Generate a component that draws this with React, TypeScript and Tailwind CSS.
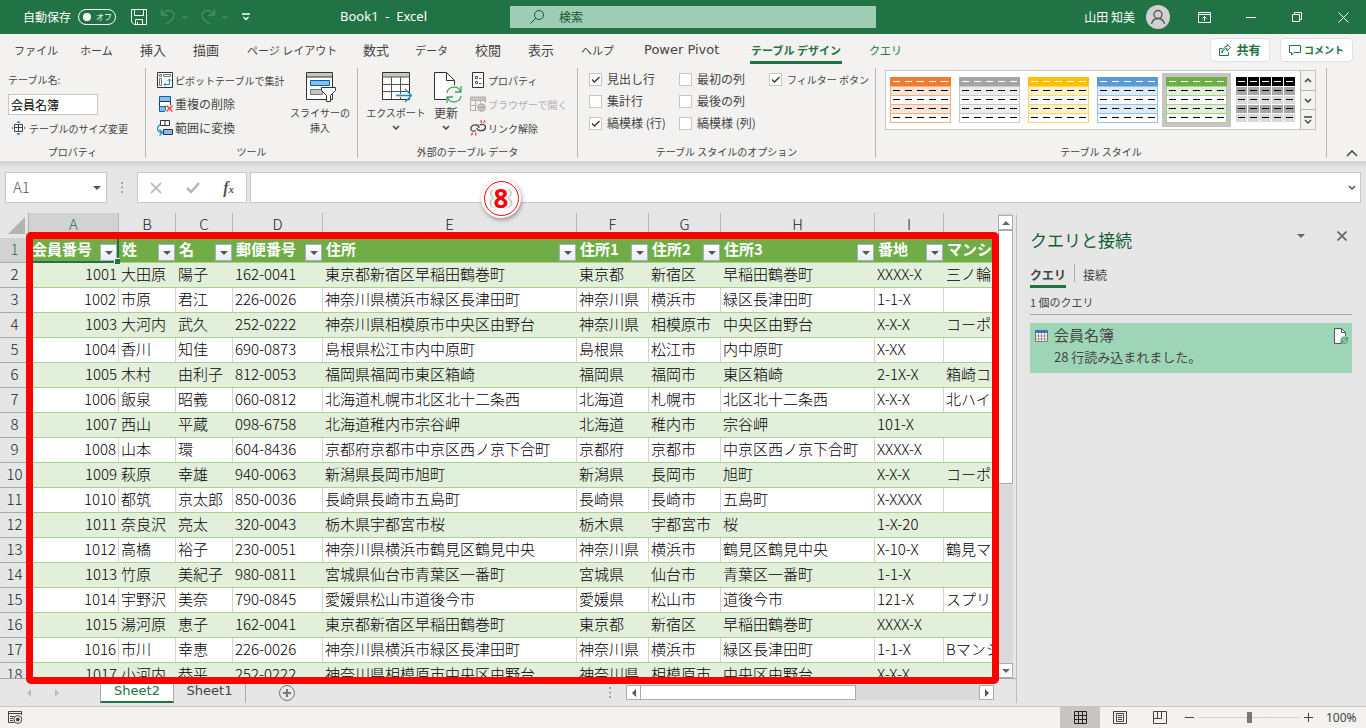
import type { ReactNode } from "react";

type Row = [number, string, string, string, string, string, string, string, string, string];

const rows: Row[] = [
  [1001, "大田原", "陽子", "162-0041", "東京都新宿区早稲田鶴巻町", "東京都", "新宿区", "早稲田鶴巻町", "XXXX-X", "三ノ輪"],
  [1002, "市原", "君江", "226-0026", "神奈川県横浜市緑区長津田町", "神奈川県", "横浜市", "緑区長津田町", "1-1-X", ""],
  [1003, "大河内", "武久", "252-0222", "神奈川県相模原市中央区由野台", "神奈川県", "相模原市", "中央区由野台", "X-X-X", "コーポ"],
  [1004, "香川", "知佳", "690-0873", "島根県松江市内中原町", "島根県", "松江市", "内中原町", "X-XX", ""],
  [1005, "木村", "由利子", "812-0053", "福岡県福岡市東区箱崎", "福岡県", "福岡市", "東区箱崎", "2-1X-X", "箱崎コ"],
  [1006, "飯泉", "昭義", "060-0812", "北海道札幌市北区北十二条西", "北海道", "札幌市", "北区北十二条西", "X-X-X", "北ハイ"],
  [1007, "西山", "平蔵", "098-6758", "北海道稚内市宗谷岬", "北海道", "稚内市", "宗谷岬", "101-X", ""],
  [1008, "山本", "環", "604-8436", "京都府京都市中京区西ノ京下合町", "京都府", "京都市", "中京区西ノ京下合町", "XXXX-X", ""],
  [1009, "萩原", "幸雄", "940-0063", "新潟県長岡市旭町", "新潟県", "長岡市", "旭町", "X-X-X", "コーポ"],
  [1010, "都筑", "京太郎", "850-0036", "長崎県長崎市五島町", "長崎県", "長崎市", "五島町", "X-XXXX", ""],
  [1011, "奈良沢", "亮太", "320-0043", "栃木県宇都宮市桜", "栃木県", "宇都宮市", "桜", "1-X-20", ""],
  [1012, "高橋", "裕子", "230-0051", "神奈川県横浜市鶴見区鶴見中央", "神奈川県", "横浜市", "鶴見区鶴見中央", "X-10-X", "鶴見マ"],
  [1013, "竹原", "美紀子", "980-0811", "宮城県仙台市青葉区一番町", "宮城県", "仙台市", "青葉区一番町", "1-1-X", ""],
  [1014, "宇野沢", "美奈", "790-0845", "愛媛県松山市道後今市", "愛媛県", "松山市", "道後今市", "121-X", "スプリ"],
  [1015, "湯河原", "恵子", "162-0041", "東京都新宿区早稲田鶴巻町", "東京都", "新宿区", "早稲田鶴巻町", "XXXX-X", ""],
  [1016, "市川", "幸恵", "226-0026", "神奈川県横浜市緑区長津田町", "神奈川県", "横浜市", "緑区長津田町", "1-1-X", "Bマンシ"],
  [1017, "小河内", "恭平", "252-0222", "神奈川県相模原市中央区由野台", "神奈川県", "相模原市", "中央区由野台", "X-X-X", ""],
];

const columns = [
  { letter: "A", title: "会員番号", width: "w-[90px]" },
  { letter: "B", title: "姓", width: "w-[57px]" },
  { letter: "C", title: "名", width: "w-[57px]" },
  { letter: "D", title: "郵便番号", width: "w-[90px]" },
  { letter: "E", title: "住所", width: "w-[254px]" },
  { letter: "F", title: "住所1", width: "w-[72px]" },
  { letter: "G", title: "住所2", width: "w-[72px]" },
  { letter: "H", title: "住所3", width: "w-[154px]" },
  { letter: "I", title: "番地", width: "w-[69px]" },
  { letter: "", title: "マンション", width: "w-[120px]" },
];

const tabs = [
  { name: "ファイル", cls: "w-[66px] text-[11px]" },
  { name: "ホーム", cls: "w-[60px] text-[11px]" },
  { name: "挿入", cls: "w-[53px] text-[13px]" },
  { name: "描画", cls: "w-[54px] text-[13px]" },
  { name: "ページ レイアウト", cls: "w-[116px] text-[11px]" },
  { name: "数式", cls: "w-[52px] text-[13px]" },
  { name: "データ", cls: "w-[60px] text-[11px]" },
  { name: "校閲", cls: "w-[53px] text-[13px]" },
  { name: "表示", cls: "w-[53px] text-[13px]" },
  { name: "ヘルプ", cls: "w-[63px] text-[11px]" },
  { name: "Power Pivot", cls: "w-[106px] font-['DejaVu_Sans','Noto_Sans_CJK_JP',sans-serif] text-[13px]" },
];

const styles = [
  { name: "オレンジ", head: "#ed7d31", band: "#fce4d6", line: "#f4b084" },
  { name: "灰色", head: "#a5a5a5", band: "#ededed", line: "#c9c9c9" },
  { name: "ゴールド", head: "#ffc000", band: "#fff2cc", line: "#ffd966" },
  { name: "青", head: "#5b9bd5", band: "#ddebf7", line: "#9bc2e6" },
  { name: "緑", head: "#70ad47", band: "#e2efda", line: "#a9d08e", selected: true },
];

function Chevron({ up, className = "" }: { up?: boolean; className?: string }) {
  return (
    <svg width="8" height="5" viewBox="0 0 8 5" fill="none" stroke="currentColor" strokeWidth="1.5" className={className}>
      <path d={up ? "M1 4 4 1l3 3" : "M1 1l3 3 3-3"} />
    </svg>
  );
}

function Triangle({ dir, className = "" }: { dir: "up" | "down" | "left" | "right"; className?: string }) {
  const d = { up: "M0 6h8L4 2z", down: "M0 2h8L4 6z", left: "M6 0v8L2 4z", right: "M2 0v8l4-4z" }[dir];
  return (
    <svg width="8" height="8" viewBox="0 0 8 8" fill="currentColor" className={className}>
      <path d={d} />
    </svg>
  );
}

function TitleBar() {
  return (
    <header className="flex h-[34px] shrink-0 items-center bg-[#217346] text-xs text-white">
      <div className="flex flex-1 items-center pl-[23px]">
        <span>自動保存</span>
        <button aria-label="自動保存 オフ" className="ml-[7px] flex h-4 w-[38px] items-center gap-[5px] rounded-full border border-white pl-1 text-[8px]">
          <span className="size-2 rounded-full bg-white" />
          <span className="leading-none">オフ</span>
        </button>
        <button aria-label="上書き保存" className="ml-[15px]">
          <svg width="16" height="16" viewBox="0 0 16 16" fill="none" stroke="currentColor">
            <path d="M.5.5h15v15H3L.5 13zM3.5.5v6h9v-6M4.500 15.500v-5h7v5M6.500 13v2.500" />
          </svg>
        </button>
        <button aria-label="元に戻す" className="ml-[13px] flex items-center gap-[6px] text-[#4d9069]">
          <svg width="16" height="17" viewBox="0 0 16 17" fill="none" stroke="currentColor" strokeWidth="1.3">
            <path d="M1.500 1v6h6M2 6.500C5 3 9 1.500 12 3.500c3 2 2.500 5.500.5 7.500L7 16" />
          </svg>
          <svg width="6" height="4" viewBox="0 0 8 5" fill="none" stroke="currentColor" strokeWidth="1.500"><path d="M1 1l3 3 3-3" /></svg>
        </button>
        <button aria-label="やり直し" className="ml-[12px] flex items-center gap-[6px] text-[#4d9069]">
          <svg width="16" height="17" viewBox="0 0 16 17" fill="none" stroke="currentColor" strokeWidth="1.3">
            <path d="M14.500 1v6h-6M14 6.500C11 3 7 1.500 4 3.500 1 5.500 1.500 9 3.500 11L9 16" />
          </svg>
          <svg width="6" height="4" viewBox="0 0 8 5" fill="none" stroke="currentColor" strokeWidth="1.500"><path d="M1 1l3 3 3-3" /></svg>
        </button>
        <button aria-label="クイック アクセス ツール バーのカスタマイズ" className="ml-[14px]">
          <svg width="8" height="8" viewBox="0 0 8 8" fill="none" stroke="currentColor" strokeWidth="1.3">
            <path d="M0 1h8M1.500 4 4 6.500 6.500 4" />
          </svg>
        </button>
        <h1 className="ml-[90px] whitespace-pre font-['Noto_Sans',sans-serif] text-[13px]">Book1  -  Excel</h1>
      </div>
      <label className="flex h-[22px] w-[366px] items-center gap-[15px] bg-[#9fcdb3] pl-5 text-[#0f5a30]">
        <svg width="14" height="14" viewBox="0 0 14 14" fill="none" stroke="currentColor">
          <circle cx="9" cy="5" r="4.500" />
          <path d="M5.800 8.200.5 13.500" />
        </svg>
        <input aria-label="検索" placeholder="検索" className="w-40 bg-transparent outline-none placeholder:text-[#0f5a30]" />
      </label>
      <div className="flex w-[490px] shrink-0 items-center justify-end pr-[17px]">
        <span>山田 知美</span>
        <svg width="24" height="24" viewBox="0 0 24 24" className="ml-[11px]">
          <circle cx="12" cy="12" r="12" fill="#d1d1d1" />
          <g fill="none" stroke="#555" strokeWidth="1.3">
            <circle cx="12" cy="9.500" r="4" />
            <path d="M5.500 19c1-4 3.500-5.500 6.500-5.500s5.500 1.500 6.500 5.500" />
          </g>
        </svg>
        <button aria-label="リボンの表示オプション" className="ml-7">
          <svg width="13" height="11" viewBox="0 0 13 11" fill="none" stroke="currentColor">
            <path d="M.5.5h12v10H.5zM.5 2.500h12M6.500 9V4.500M4.500 6.500l2-2 2 2" />
          </svg>
        </button>
        <button aria-label="最小化" className="ml-[35px]">
          <svg width="10" height="10" viewBox="0 0 10 10" stroke="currentColor"><path d="M0 5.500h10" /></svg>
        </button>
        <button aria-label="元に戻す (縮小)" className="ml-9">
          <svg width="10" height="10" viewBox="0 0 10 10" fill="none" stroke="currentColor">
            <path d="M.5 2.500h7v7h-7zM2.500 2.500v-2h7v7h-2" />
          </svg>
        </button>
        <button aria-label="閉じる" className="ml-9">
          <svg width="11" height="11" viewBox="0 0 11 11" stroke="currentColor"><path d="M.5.5l10 10M10.500.5l-10 10" /></svg>
        </button>
      </div>
    </header>
  );
}

function TabBar() {
  return (
    <nav className="flex h-8 items-center pl-[14px]">
      {tabs.map((t) => (
        <button key={t.name} className={`shrink-0 whitespace-nowrap text-left leading-5 ${t.cls}`}>{t.name}</button>
      ))}
      <button className="h-7 w-[92px] shrink-0 whitespace-nowrap border-b-[3px] border-[#217346] pt-[3px] text-[11px] leading-5 font-bold text-[#217346]">
        テーブル デザイン
      </button>
      <button className="ml-[27px] shrink-0 text-[11px] leading-5 text-[#217346]">クエリ</button>
      <div className="ml-auto flex gap-[10px] pr-[13px] text-xs font-bold text-[#217346]">
        <button className="flex h-6 w-[60px] items-center justify-center gap-[5px] rounded-sm border border-[#e1dfdd] bg-white">
          <svg width="12" height="12" viewBox="0 0 12 12" fill="none" stroke="currentColor">
            <path d="M3 4.500H.5v7h9v-3M3 9c.5-3 2.500-4.500 5-4.500V7l3.500-3.500L8 .5v2C5 2.500 3 5 3 9z" />
          </svg>
          共有
        </button>
        <button className="flex h-6 w-[73px] items-center justify-center gap-[3px] rounded-sm border border-[#e1dfdd] bg-white text-[10px]">
          <svg width="12" height="11" viewBox="0 0 12 11" fill="none" stroke="currentColor">
            <path d="M.5.5h11v7H5L2.500 10V7.500h-2z" />
          </svg>
          コメント
        </button>
      </div>
    </nav>
  );
}

function Group({ label, className, children }: { label: string; className: string; children: ReactNode }) {
  return (
    <section className={`flex h-[90px] shrink-0 flex-col justify-between border-r border-[#b8b6b4] ${className}`}>
      <div className="flex">{children}</div>
      <h2 className="text-center text-[10px] leading-3 whitespace-nowrap">{label}</h2>
    </section>
  );
}

function Command({ icon, label, small, disabled }: { icon: ReactNode; label: string; small?: boolean; disabled?: boolean }) {
  return (
    <button disabled={disabled} className={`flex h-6 items-center gap-[2px] whitespace-nowrap ${small ? "text-[10px]" : "text-xs"} ${disabled ? "text-[#b1afad]" : ""}`}>
      <svg width="16" height="16" viewBox="0 0 16 16" fill="none">{icon}</svg>
      {label}
    </button>
  );
}

function Check({ label, checked, small }: { label: string; checked?: boolean; small?: boolean }) {
  return (
    <label className={`flex h-[22px] items-center gap-[5px] whitespace-nowrap ${small ? "text-[10px]" : "text-xs"}`}>
      <span className="grid place-items-center">
        <input type="checkbox" defaultChecked={checked} className="peer col-start-1 row-start-1 size-[13px] appearance-none border border-[#c8c6c4] bg-white" />
        <svg width="9" height="7" viewBox="0 0 9 7" fill="none" stroke="#333" strokeWidth="1.300" className="pointer-events-none invisible col-start-1 row-start-1 peer-checked:visible">
          <path d="M1 3.500 3.500 6 8.500 1" />
        </svg>
      </span>
      {label}
    </label>
  );
}

function StyleThumb({ head, band, line }: { head: string; band: string; line: string }) {
  return (
    <svg width="61" height="46" viewBox="0 0 61 46">
      <rect width="61" height="46" fill={line} />
      <rect width="61" height="9" fill={head} />
      {[0, 1, 2, 3].map((i) => (
        <rect key={i} x="1" y={10 + i * 9} width="59" height="8" fill={i % 2 ? "#fff" : band} />
      ))}
      {[0, 1, 2, 3, 4].map((i) => (
        <path key={i} d={`M3 ${4.5 + i * 9}h55`} stroke={i ? "#000" : "#fff"} strokeDasharray="7 5" />
      ))}
    </svg>
  );
}

function DarkThumb() {
  const fills = ["#000", "#a6a6a6", "#d9d9d9", "#a6a6a6", "#d9d9d9"];
  return (
    <svg width="61" height="46" viewBox="0 0 61 46">
      <rect width="61" height="46" fill="#fff" />
      {fills.map((fill, r) =>
        [0, 1, 2, 3, 4].map((c) => <rect key={`${r}-${c}`} x={c * 12 + 1} y={r * 9 + (r ? 1 : 0)} width="11" height={r ? 8 : 9} fill={fill} />)
      )}
      {fills.map((_, r) => (
        <path key={r} d={`M3 ${4.5 + r * 9}h55`} stroke={r ? "#000" : "#fff"} strokeDasharray="7 5" />
      ))}
    </svg>
  );
}

function Ribbon() {
  return (
    <div className="shrink-0 bg-[#f3f2f1] text-[#444]">
      <TabBar />
      <div className="flex h-[95px] items-start pt-[2px]">
        <Group label="プロパティ" className="w-[146px]">
          <div className="flex flex-col pl-2">
            <label htmlFor="table-name" className="h-6 text-[10px] leading-6">テーブル名:</label>
            <div className="flex h-6 items-center">
              <input id="table-name" defaultValue="会員名簿" className="h-[21px] w-[90px] border border-[#c8c6c4] bg-white px-[2px] text-xs text-black" />
            </div>
            <div className="pl-[3px]">
              <Command
                small
                label="テーブルのサイズ変更"
                icon={
                  <>
                    <path d="M3.500 4.500h8v7h-8zM3.500 7.500h8M7.500 4.500v7" stroke="#444" />
                    <path d="M5.500 3 7.500.5l2 2.500zM5.500 13l2 2.500 2-2.500zM2 6.500.5 8 2 9.500zM13 6.500 14.500 8 13 9.500z" fill="#1e8bcd" />
                  </>
                }
              />
            </div>
          </div>
        </Group>

        <Group label="ツール" className="w-[212px]">
          <div className="ml-[11px] flex w-[132px] flex-col items-start">
            <Command
              small
              label="ピボットテーブルで集計"
              icon={
                <>
                  <path d="M.5.5h15v15H.5z" fill="#fff" stroke="#333" />
                  <path d="M2.500 2.500h2v2h-2zM6.500 2.500h7v2h-7zM2.500 6.500h2v7h-2z" stroke="#777" />
                  <path d="M7 12.500h5.500V7M9 10.500l-2 2 2 2M10.500 9l2-2 2 2" stroke="#1e8bcd" />
                </>
              }
            />
            <Command
              label="重複の削除"
              icon={
                <>
                  <path d="M2.500.5h11v5h-11z" fill="#83beec" stroke="#0063b1" />
                  <path d="M2.500 5.500h11v5h-11z" fill="#fff" stroke="#333" />
                  <path d="M2.500 10.500h5l1.500 2-1.500 3h-5z" fill="#83beec" stroke="#0063b1" />
                  <path d="M9 9h7v7H9z" fill="#f3f2f1" />
                  <path d="M9.500 9.500l6 6M15.500 9.500l-6 6" stroke="#e8413c" strokeWidth="1.300" />
                </>
              }
            />
            <Command
              label="範囲に変換"
              icon={
                <>
                  <path d="M3.500.5h9v5h-9zM8 .5v5" fill="#fff" stroke="#333" />
                  <path d="M6.500 9.500h9v5h-9z" fill="#83beec" stroke="#333" />
                  <path d="M3 4.500C-.5 7-.5 12 4.500 12.500M2.500 9.500l3 3-3 3" stroke="#1e8bcd" strokeWidth="1.300" />
                </>
              }
            />
          </div>
          <button className="flex w-[62px] flex-col items-center pt-1 text-[10px] leading-[15px]">
            <svg width="31" height="31" viewBox="0 0 31 31" className="mb-[2px]">
              <path d="M1.500.5h26v27h-26z" fill="#fff" stroke="#333" />
              <path d="M2 1h25v4H2z" fill="#c8c6c4" />
              <path d="M1.500 5h26" stroke="#333" />
              <path d="M5.500 8.500h19v5h-19z" fill="#83beec" stroke="#0063b1" />
              <path d="M5.500 17.500h12v5h-12z" fill="#c8c6c4" stroke="#777" />
              <path d="M16.500 15.500h14v3l-5 5v6h-4v-6l-5-5z" fill="#fff" stroke="#333" />
            </svg>
            スライサーの
            <br />
            挿入
          </button>
        </Group>

        <Group label="外部のテーブル データ" className="w-[220px]">
          <button className="ml-[7px] flex w-[62px] flex-col items-center pt-1 text-[10px] leading-[15px]">
            <svg width="31" height="31" viewBox="0 0 31 31" className="mb-[2px]" fill="none">
              <path d="M1.500.5h27v27h-27z" fill="#fff" stroke="#333" />
              <path d="M2 1h26v4H2z" fill="#c8c6c4" />
              <path d="M1.500 5h27M1.500 12.500h27M1.500 19.500h27M10.500 5v22M19.500 5v22" stroke="#555" />
              <path d="M15 23.500h17" stroke="#f3f2f1" strokeWidth="3" />
              <path d="M15 23.500h15M24 17l6.500 6.500L24 30" stroke="#1e8bcd" strokeWidth="1.300" />
            </svg>
            エクスポート
            <Chevron className="mt-[5px]" />
          </button>
          <button className="flex w-[38px] flex-col items-center pt-1 text-xs leading-[15px]">
            <svg width="31" height="31" viewBox="0 0 31 31" className="mb-[2px]" fill="none">
              <path d="M15 27.500H3.500V.5h12l8 8V13" fill="#fff" stroke="#333" />
              <path d="M15.500.5v8h8" stroke="#333" />
              <path d="M16 21c1-7 11-8 13.500-1.500M30 14v6h-6M30 24c-1 7-11 8-13.500 1.500M16 31v-6h6" stroke="#3fa65a" strokeWidth="1.300" />
            </svg>
            更新
            <Chevron className="mt-[5px]" />
          </button>
          <div className="ml-[5px] flex flex-col items-start">
            <Command
              small
              label="プロパティ"
              icon={
                <>
                  <path d="M2.500.5h11v15h-11z" fill="#fff" stroke="#333" />
                  <path d="M5.500 4.500h2v2h-2zM5.500 9.500h2v2h-2zM9 6.500h2.500M9 11.500h2.500" stroke="#555" />
                </>
              }
            />
            <Command
              small
              disabled
              label="ブラウザーで開く"
              icon={
                <>
                  <path d="M.5 1h15v3H.5z" fill="#c8c6c4" />
                  <path d="M7 14.500H.5V1h15v6M.5 4.500h15M.5 9.500H7M5.500 4.500v10M10.500 4.500v2" stroke="#b1afad" />
                  <circle cx="11.500" cy="11.500" r="3.800" fill="#ddd" stroke="#a5a3a1" />
                  <path d="M8 11.500h7M11.500 8c-2 2-2 5 0 7M11.500 8c2 2 2 5 0 7" stroke="#a5a3a1" />
                </>
              }
            />
            <Command
              small
              label="リンク解除"
              icon={
                <>
                  <path d="M6 10.500c-3 1.500-5.500 0-5-2.500s3-3.500 5.500-3c1.500.3 2.500 1.500 2.500 3M9.500 5c3-1.500 6.500 0 6 2.500s-3 3.500-5.500 3C8.500 10.200 7 9.500 7 8" stroke="#444" strokeWidth="1.300" />
                  <path d="M11 0l.5 3M15 .5 13.500 3M2.500 12.500 1.500 15.500M5.500 12.500l.5 3" stroke="#e8413c" strokeWidth="1.300" />
                </>
              }
            />
          </div>
        </Group>

        <Group label="テーブル スタイルのオプション" className="w-[298px]">
          <div className="ml-[11px] w-[90px]">
            <Check label="見出し行" checked />
            <Check label="集計行" />
            <Check label="縞模様 (行)" checked />
          </div>
          <div className="w-[90px]">
            <Check label="最初の列" />
            <Check label="最後の列" />
            <Check label="縞模様 (列)" />
          </div>
          <Check label="フィルター ボタン" checked small />
        </Group>

        <Group label="テーブル スタイル" className="w-[451px]">
          <div className="ml-[9px] mt-[2px] flex h-[60px] border border-[#c8c6c4] bg-white">
            {styles.map((s) => (
              <button key={s.name} aria-label={s.name} className={`mt-[2px] flex h-[54px] w-[69px] items-center justify-center ${s.selected ? "bg-[#c5c5c5]" : ""}`}>
                <StyleThumb head={s.head} band={s.band} line={s.line} />
              </button>
            ))}
            <button aria-label="黒" className="mt-[2px] flex h-[54px] w-[69px] items-center justify-center">
              <DarkThumb />
            </button>
            <div className="flex w-[15px] flex-col divide-y divide-[#b8b6b4] border-l border-[#b8b6b4] bg-[#f3f2f1]">
              <button aria-label="上へ" className="flex flex-1 items-center justify-center"><Chevron up /></button>
              <button aria-label="下へ" className="flex flex-1 items-center justify-center"><Chevron /></button>
              <button aria-label="その他" className="flex flex-1 items-center justify-center">
                <svg width="8" height="8" viewBox="0 0 8 8" fill="none" stroke="currentColor" strokeWidth="1.300">
                  <path d="M0 1h8M1 4l3 3 3-3" />
                </svg>
              </button>
            </div>
          </div>
        </Group>
        <button aria-label="リボンを折りたたむ" className="mr-2 ml-auto self-end pb-1">
          <svg width="12" height="7" viewBox="0 0 12 7" fill="none" stroke="#333" strokeWidth="1.300"><path d="M1 6l5-5 5 5" /></svg>
        </button>
      </div>
    </div>
  );
}

function FormulaBar() {
  return (
    <div className="flex h-[52px] shrink-0 items-start bg-linear-to-b from-[#cfcfcf] to-[#e6e6e6] to-15% px-[5px] pt-[11px]">
      <div className="flex h-[31px] w-[102px] shrink-0 items-center justify-between border border-[#c6c6c6] bg-white pr-[5px] text-[#555]">
        <input aria-label="名前ボックス" defaultValue="A1" className="w-16 pl-[7px] font-['Noto_Sans_CJK_JP',sans-serif] text-[15px] font-light" />
        <Triangle dir="down" />
      </div>
      <Dots className="mx-[14px] mt-[10px]" />
      <div className="flex h-[31px] w-[110px] shrink-0 items-center justify-between border border-[#c6c6c6] bg-white px-3 text-[#b5b5b5]">
        <button aria-label="キャンセル">
          <svg width="12" height="12" viewBox="0 0 12 12" stroke="currentColor" strokeWidth="1.700"><path d="M1 1l10 10M11 1 1 11" /></svg>
        </button>
        <button aria-label="入力">
          <svg width="14" height="12" viewBox="0 0 14 12" fill="none" stroke="currentColor" strokeWidth="2.500"><path d="M1 6l4 4 8-9" /></svg>
        </button>
        <button aria-label="関数の挿入" className="font-['Liberation_Serif',serif] text-base leading-none font-bold text-[#555] italic">
          f<span className="text-[11px]">x</span>
        </button>
      </div>
      <div className="relative ml-[3px] flex h-[31px] flex-1 items-center border border-[#c6c6c6] bg-white pr-1 text-[#555]">
        <input aria-label="数式バー" className="h-full min-w-0 flex-1 px-2 text-sm outline-none" />
        <Chevron />
        <div className="absolute top-[5px] left-[230px] z-20 flex size-10 items-center justify-center rounded-full bg-white shadow-[1px_2px_4px_rgba(0,0,0,0.35)]">
          <span className="flex size-[35px] items-center justify-center rounded-full border-[1.5px] border-[#f00] font-['Noto_Sans',sans-serif] text-[26px] leading-none font-bold text-[#f00] [text-shadow:-3px_0_0_#fff,3px_0_0_#fff,-5px_0_1px_#c4c4c4,5px_0_1px_#c4c4c4]">
            8
          </span>
        </div>
      </div>
    </div>
  );
}

function Dots({ className = "" }: { className?: string }) {
  return (
    <svg width="2" height="11" viewBox="0 0 2 11" fill="#a6a6a6" className={className}>
      <path d="M0 0h2v2H0zM0 4.500h2v2H0zM0 9h2v2H0z" />
    </svg>
  );
}

function Grid() {
  return (
    <div className="relative flex min-h-0 flex-1 border-b border-[#a6a6a6]">
      <div className="min-w-0 flex-1 overflow-hidden">
        <table className="w-[1064px] table-fixed border-separate border-spacing-0 text-[15px] leading-5 text-[#222]">
          <colgroup>
            <col className="w-[29px]" />
            {columns.map((c) => <col key={c.title} className={c.width} />)}
          </colgroup>
          <thead>
            <tr className="h-[25px]">
              <th aria-label="すべて選択" className="border-r border-[#b1b1b1] p-0">
                <svg width="17" height="17" viewBox="0 0 17 17" className="ml-2"><path d="M17 0v17H0z" fill="#b4b4b4" /></svg>
              </th>
              {columns.map((c, i) => (
                <th key={c.title} className={`border-r border-[#b9b9b9] p-0 pb-[3px] text-center font-light ${i === 0 ? "bg-[#d2d2d2] text-[#217346]" : ""}`}>
                  {c.letter}
                </th>
              ))}
            </tr>
          </thead>
          <tbody>
            <tr className="h-[25px] bg-[#70ad47] font-bold text-white">
              <th className="border-b border-[#ababab] bg-[#d2d2d2] p-0 pb-[3px] font-light text-[#217346]">1</th>
              {columns.map((c, i) => (
                <td key={c.title} className={`h-[25px] p-0 ${i === 0 ? "relative border-r-2 border-b-2 border-[#217346]" : "border-b border-[#a9d08e]"}`}>
                  <div className={`flex items-start justify-between overflow-hidden pl-[3px] leading-[22px] whitespace-nowrap ${i === 0 ? "h-[23px]" : "h-6"}`}>
                    {c.title}
                    {i < 9 && (
                      <button aria-label={`${c.title} フィルター`} className={`mt-[6px] flex size-[17px] shrink-0 items-center justify-center border border-[#a9b0ba] bg-linear-to-b from-white to-[#e9edf5] text-[#555] ${i === 0 ? "" : "mr-px"}`}>
                        <Triangle dir="down" />
                      </button>
                    )}
                  </div>
                  {i === 0 && <span className="absolute -right-[3px] -bottom-[3px] z-[5] size-[6px] border-t border-l border-white bg-[#217346]" />}
                </td>
              ))}
            </tr>
            {rows.map((r, n) => (
              <tr key={r[0]} className={`h-[25px] ${n % 2 ? "bg-white" : "bg-[#e2efda]"}`}>
                <th className="border-b border-[#ababab] bg-[#e6e6e6] p-0 pb-[3px] font-light">{n + 2}</th>
                {r.map((v, i) => (
                  <td
                    key={i}
                    className={`overflow-hidden border-b border-b-[#a9d08e] p-0 pb-[3px] font-light whitespace-nowrap text-black ${i === 0 ? "pr-[2px] text-right" : "pl-[2px]"} ${n % 2 ? "border-r border-r-[#d4d4d4]" : ""}`}
                  >
                    {v}
                  </td>
                ))}
              </tr>
            ))}
          </tbody>
        </table>
      </div>
      <div className="mr-[3px] flex w-[15px] shrink-0 flex-col bg-[#dadada] pt-[2px] text-[#666]">
        <button aria-label="上へスクロール" className="flex h-[15px] items-center justify-center border border-[#ababab] bg-white"><Triangle dir="up" /></button>
        <div className="h-[254px] border border-[#ababab] bg-white" />
        <button aria-label="下へスクロール" className="mt-auto flex h-[15px] items-center justify-center border border-[#ababab] bg-white"><Triangle dir="down" /></button>
      </div>
      <div className="pointer-events-none absolute top-[19px] right-[17px] -bottom-[6px] left-[26px] z-10 rounded-[5px] border-[7px] border-[#f00]" />
    </div>
  );
}

function SheetTabs() {
  return (
    <div className="flex h-[27px] shrink-0 items-center font-['DejaVu_Sans','Noto_Sans_CJK_JP',sans-serif] text-[13px] text-[#444]">
      <Triangle dir="left" className="ml-[25px] text-[#bbb]" />
      <Triangle dir="right" className="ml-5 text-[#bbb]" />
      <button className="ml-[39px] h-6 w-[74px] self-start border-x border-b-2 border-x-[#ababab] border-b-[#217346] bg-white pt-[2px] text-[#217346]">Sheet2</button>
      <button className="h-6 w-[72px] self-start border-r border-[#ababab]">Sheet1</button>
      <button aria-label="新しいシート" className="ml-[33px]">
        <svg width="16" height="16" viewBox="0 0 16 16" fill="none" stroke="#777">
          <circle cx="8" cy="8" r="7.500" />
          <path d="M4 8h8M8 4v8" strokeWidth="2" />
        </svg>
      </button>
      <Dots className="ml-auto" />
      <div className="mr-[22px] ml-[15px] flex h-[15px] w-[368px] bg-[#dadada] text-[#555]">
        <button aria-label="左へスクロール" className="flex w-[15px] items-center justify-center border border-[#ababab] bg-white"><Triangle dir="left" /></button>
        <div className="w-[215px] border border-l-0 border-[#ababab] bg-white" />
        <button aria-label="右へスクロール" className="ml-auto flex w-[15px] items-center justify-center border border-[#ababab] bg-white"><Triangle dir="right" /></button>
      </div>
    </div>
  );
}

function QueryPane() {
  return (
    <aside className="mt-[2px] mb-[3px] w-[350px] shrink-0 border-l border-[#bdbdbd] pr-[14px] pl-[13px] text-[#444]">
      <div className="flex h-[41px] items-end justify-between">
        <h2 className="text-[17px] leading-8 text-[#185c37]">クエリと接続</h2>
        <div className="flex items-center gap-8 self-start pt-4 pr-[5px] text-[#666]">
          <Triangle dir="down" />
          <button aria-label="閉じる">
            <svg width="10" height="10" viewBox="0 0 10 10" stroke="currentColor" strokeWidth="1.700"><path d="M.5.5l9 9M9.500.5l-9 9" /></svg>
          </button>
        </div>
      </div>
      <div className="mt-2 flex items-start text-xs">
        <button className="h-[24px] border-b-[3px] border-[#217346] font-bold">クエリ</button>
        <span className="mx-2 h-[18px] w-px bg-[#ababab]" />
        <button className="h-[21px]">接続</button>
      </div>
      <p className="mt-1 border-b border-[#ababab] pb-[2px] text-[11px] leading-5">1 個のクエリ</p>
      <div className="mt-2 flex h-[50px] bg-[#9fd5b7] pt-[2px] pr-[3px] pl-[5px]">
        <svg width="13" height="12" viewBox="0 0 13 12" className="mt-[5px]">
          <path d="M.5.5h12v11H.5z" fill="#fff" stroke="#777" />
          <path d="M.5 6h12M.5 9h12M3.500 3v9M6.500 3v9M9.500 3v9" stroke="#999" />
          <path d="M0 0h13v3H0z" fill="#4472b8" />
        </svg>
        <div className="ml-[6px] flex-1">
          <h3 className="text-[15px] leading-5">会員名簿</h3>
          <p className="text-[13px] leading-6">28 行読み込まれました。</p>
        </div>
        <svg width="15" height="17" viewBox="0 0 15 17" fill="none" className="mt-[3px]">
          <path d="M.5.5h7l4 4v11H.5z" fill="#fff" stroke="#555" />
          <path d="M7.500.5v4h4" stroke="#555" />
          <circle cx="10.500" cy="12.500" r="4.500" fill="#9fd5b7" />
          <path d="M7.500 12c.5-3 5-3 6-.5M13.500 9v3h-3M13.500 13c-.5 3-5 3-6 .5M7.500 16v-3h3" stroke="#217346" strokeOpacity=".7" />
        </svg>
      </div>
    </aside>
  );
}

function StatusBar() {
  return (
    <footer className="flex h-[22px] shrink-0 items-center border-t border-[#c6c6c6] bg-[#f3f2f1] text-[#444]">
      <button aria-label="マクロの記録" className="ml-2">
        <svg width="15" height="13" viewBox="0 0 15 13" fill="none" stroke="#444">
          <path d="M6 11.500H.5V.5h13V4M.5 2.500h13M2 5.500h4M2 7.500h3M2 9.500h3" />
          <circle cx="9.800" cy="8.500" r="4" fill="#f3f2f1" />
          <circle cx="9.800" cy="8.500" r="1.500" fill="#444" />
        </svg>
      </button>
      <div className="ml-auto flex h-full">
        <button aria-label="標準" className="flex w-10 items-center justify-center bg-[#c8c6c4]">
          <svg width="13" height="13" viewBox="0 0 13 13" fill="none" stroke="#222"><path d="M.5.5h12v12H.5zM4.500.5v12M8.500.5v12M.5 4.500h12M.5 8.500h12" /></svg>
        </button>
        <button aria-label="ページ レイアウト表示" className="flex w-10 items-center justify-center">
          <svg width="14" height="13" viewBox="0 0 14 13" fill="none" stroke="#444"><path d="M.5.5h13v12H.5zM3.500 2.500h7v8h-7zM5 4.500h4M5 6.500h4M5 8.500h4" /></svg>
        </button>
        <button aria-label="改ページ プレビュー" className="flex w-10 items-center justify-center">
          <svg width="14" height="13" viewBox="0 0 14 13" fill="none" stroke="#444"><path d="M.5.5h13v12H.5zM.5 7.500h8v-7M4.500.5v7" /></svg>
        </button>
      </div>
      <button aria-label="縮小" className="ml-[5px]">
        <svg width="9" height="9" viewBox="0 0 9 9" stroke="#444"><path d="M0 4.500h9" /></svg>
      </button>
      <input
        type="range"
        aria-label="ズーム"
        defaultValue={50}
        className="mx-[5px] h-[11px] w-[100px] appearance-none bg-linear-to-b from-transparent from-45% via-[#b1afad] via-45% to-transparent to-55% [&::-webkit-slider-thumb]:h-[11px] [&::-webkit-slider-thumb]:w-[5px] [&::-webkit-slider-thumb]:appearance-none [&::-webkit-slider-thumb]:bg-[#797775]"
      />
      <button aria-label="拡大">
        <svg width="9" height="9" viewBox="0 0 9 9" stroke="#444"><path d="M0 4.500h9M4.500 0v9" /></svg>
      </button>
      <span className="ml-[13px] w-10 font-['Noto_Sans',sans-serif] text-xs">100%</span>
    </footer>
  );
}

export default function App() {
  return (
    <div className="flex h-screen flex-col overflow-hidden bg-[#e6e6e6] font-['Noto_Sans_CJK_JP',sans-serif]">
      <TitleBar />
      <Ribbon />
      <FormulaBar />
      <main className="flex min-h-0 flex-1">
        <div className="flex min-w-0 flex-1 flex-col">
          <Grid />
          <SheetTabs />
        </div>
        <QueryPane />
      </main>
      <StatusBar />
    </div>
  );
}
